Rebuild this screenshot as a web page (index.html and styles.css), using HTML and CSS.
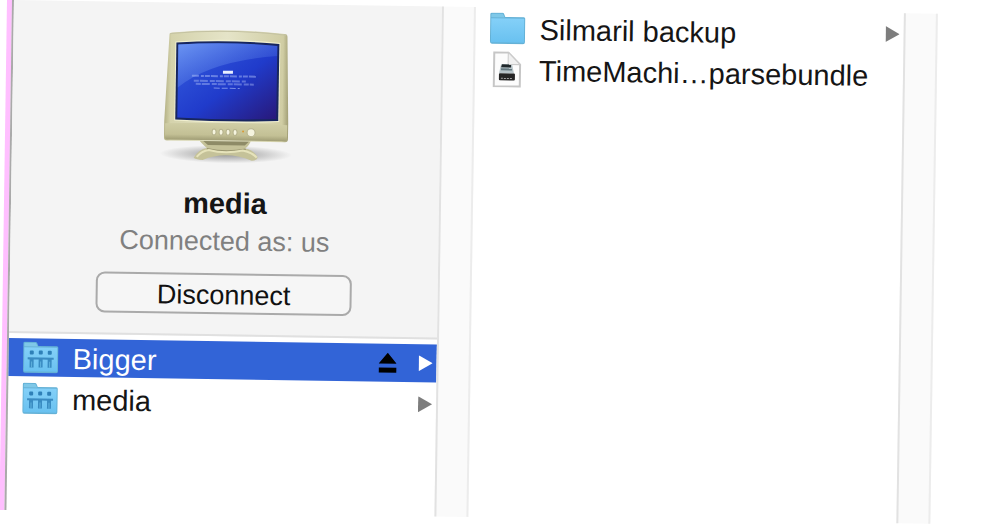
FILE: index.html
```html
<!DOCTYPE html>
<html lang="en">
<head>
    <meta charset="UTF-8">
    <meta name="viewport" content="width=device-width, initial-scale=1.0">
    <title>media</title>
    <link rel="stylesheet" href="styles.css">
</head>
<body>

<!-- Shared icons -->
<svg class="sprite" aria-hidden="true">
    <defs>
        <linearGradient id="folderFill" x1="0" y1="0" x2="0" y2="1">
            <stop offset="0" stop-color="#84d0f8"/>
            <stop offset="1" stop-color="#69c1f0"/>
        </linearGradient>
    </defs>
    <symbol id="folder" viewBox="0 0 36 32">
        <path d="M.5 29V2Q.5.5 2 .5H13Q14 .5 14.500 2L15.500 4.500H34Q35.500 4.500 35.500 6V29.500Q35.500 31.500 33.500 31.500H2.500Q.5 31.500 .5 29Z" fill="#64b1d6"/>
        <path d="M1.500 5V2.500Q1.500 1.500 2.500 1.500H13L15 5Z" fill="#7fc8e8"/>
        <path d="M1.500 6H34.500V30H1.500Z" fill="url(#folderFill)"/>
    </symbol>
    <symbol id="shared" viewBox="0 0 36 32">
        <use href="#folder"/>
        <g fill="#2f80b8">
            <rect x="7" y="9" width="4" height="4" rx="1"/>
            <rect x="16" y="9" width="4" height="4" rx="1"/>
            <rect x="25" y="9" width="4" height="4" rx="1"/>
            <path d="M5 16H31V18H29V26H25V18H20V26H16V18H11V26H7V18H5Z" opacity=".85"/>
        </g>
        <path d="M9 20V26M18 20V26M27 20V26" stroke="#5fb2de"/>
    </symbol>
    <symbol id="arrow" viewBox="0 0 14 16">
        <path d="M0 0L14 8L0 16Z" fill="currentColor"/>
    </symbol>
</svg>

<main class="browser">
    <section class="column">
        <div class="content">
            <header class="server">
                <svg class="monitor" viewBox="0 0 134 136" aria-hidden="true">
                    <defs>
                        <linearGradient id="case" x1="0" y1="0" x2="1" y2="0">
                            <stop offset="0" stop-color="#b5b286"/>
                            <stop offset=".05" stop-color="#d5d3ac"/>
                            <stop offset=".5" stop-color="#e5e4c8"/>
                            <stop offset=".95" stop-color="#d0cda4"/>
                            <stop offset="1" stop-color="#a19e75"/>
                        </linearGradient>
                        <linearGradient id="chin" x1="0" y1="0" x2="0" y2="1">
                            <stop offset="0" stop-color="#d0cea6"/>
                            <stop offset=".7" stop-color="#c3c095"/>
                            <stop offset="1" stop-color="#a19e76"/>
                        </linearGradient>
                        <linearGradient id="screen" x1="0" y1="0" x2="1" y2="1">
                            <stop offset="0" stop-color="#365fe0"/>
                            <stop offset=".55" stop-color="#203bcb"/>
                            <stop offset="1" stop-color="#281879"/>
                        </linearGradient>
                        <linearGradient id="shine" x1="0" y1="0" x2="1" y2="1">
                            <stop offset="0" stop-color="#7aa3f8" stop-opacity=".8"/>
                            <stop offset="1" stop-color="#4264d8" stop-opacity="0"/>
                        </linearGradient>
                        <radialGradient id="shadow">
                            <stop offset="0" stop-color="#555" stop-opacity=".6"/>
                            <stop offset="1" stop-color="#555" stop-opacity="0"/>
                        </radialGradient>
                    </defs>
                    <ellipse cx="67" cy="125" rx="66" ry="9" fill="url(#shadow)"/>
                    <path d="M38 109H93Q90 117 86 119Q95 120 99 128Q98 131 93 131Q67 121 44 131Q38 131 35 129Q40 120 48 119Q44 116 38 109Z" fill="#c5c299"/>
                    <path d="M42 110H92L86 116H49Z" fill="#8e8b67"/>
                    <path d="M48 120Q67 124 87 120" fill="none" stroke="#9a9670" stroke-width="2"/>
                    <path d="M38 128Q43 122 50 121Q66 125 84 121Q94 123 98 128" fill="none" stroke="#e6e3bb" stroke-width="2"/>
                    <path d="M9 6Q9 4 12 4Q67 -2 124 4Q127 4 127 7L129 93V109Q129 112 126 112H8Q5 112 5 109V93Z" fill="url(#case)"/>
                    <path d="M10 5Q67 -1 126 5" fill="none" stroke="#c4c2a2"/>
                    <path d="M6 95Q67 92 128 95V109Q128 111 126 111H8Q6 111 6 109Z" fill="url(#chin)"/>
                    <path d="M15 13Q67 8 120 13V92Q67 95 15 92Z" fill="#f0efcf"/>
                    <path d="M16 14Q67 10 119 14V91Q67 93 16 91Z" fill="#17265f"/>
                    <path d="M18 16Q67 12 117 16V89Q67 91 18 89Z" fill="url(#screen)"/>
                    <path d="M18 16Q67 12 117 16V26Q50 32 18 59Z" fill="url(#shine)"/>
                    <path d="M63 43H73" stroke="#e8efff" stroke-width="3"/>
                    <path d="M32 47H98" stroke="#b9c9fb" stroke-width="2" stroke-dasharray="7 2 3 1 5 1" opacity=".45"/>
                    <path d="M34 52H86M36 55H94" stroke="#b9c9fb" stroke-width="2" stroke-dasharray="5 1 8 2" opacity=".4"/>
                    <path d="M54 59H80" stroke="#b9c9fb" stroke-dasharray="6 2" opacity=".6"/>
                    <g fill="#f5f4df" stroke="#b5b28c">
                        <ellipse cx="55" cy="103" rx="2" ry="3"/>
                        <ellipse cx="62" cy="103" rx="2" ry="3"/>
                        <ellipse cx="69" cy="103" rx="2" ry="3"/>
                        <ellipse cx="76" cy="103" rx="2" ry="3"/>
                        <circle cx="92" cy="103" r="4"/>
                    </g>
                    <circle cx="84" cy="102" r="1" fill="#d99a35"/>
                </svg>
                <h1>media</h1>
                <p>Connected as: us</p>
                <button class="disconnect" type="button">Disconnect</button>
            </header>
            <ul class="list">
                <li class="row selected">
                    <a href="#bigger">
                        <svg class="icon" aria-hidden="true"><use href="#shared"/></svg>
                        <span>Bigger</span>
                    </a>
                    <button class="eject" type="button" aria-label="Eject">
                        <svg viewBox="0 0 18 21" aria-hidden="true"><path d="M9 0L18 11H0ZM0 15H18V20H0Z"/></svg>
                    </button>
                    <svg class="arrow" aria-hidden="true"><use href="#arrow"/></svg>
                </li>
                <li class="row">
                    <a href="#media">
                        <svg class="icon" aria-hidden="true"><use href="#shared"/></svg>
                        <span>media</span>
                    </a>
                    <svg class="arrow" aria-hidden="true"><use href="#arrow"/></svg>
                </li>
            </ul>
        </div>
        <div class="gutter"></div>
    </section>

    <section class="column">
        <div class="content">
            <ul class="list files">
                <li class="row">
                    <a href="#silmaril">
                        <svg class="icon" aria-hidden="true"><use href="#folder"/></svg>
                        <span>Silmaril backup</span>
                    </a>
                    <svg class="arrow" aria-hidden="true"><use href="#arrow"/></svg>
                </li>
                <li class="row">
                    <a href="#timemachine">
                        <svg class="icon document" viewBox="0 0 36 36" aria-hidden="true">
                            <path d="M5 1H19L31 13V35H5Z" fill="#fcfcfc" stroke="#c6c6c6" stroke-width="2"/>
                            <path d="M19 1V13H31Z" fill="#f0f0f0" stroke="#cacaca"/>
                            <path d="M12 13H23L25 22H10Z" fill="#b7c4c9"/>
                            <path d="M13 13H22V16H12Z" fill="#20282b"/>
                            <path d="M12 18H23" stroke="#657980" stroke-width="2"/>
                            <rect x="10" y="22" width="16" height="7" rx="1" fill="#252525"/>
                            <path d="M12 27H24" stroke="#a0a0a0" stroke-dasharray="2 1"/>
                        </svg>
                        <span>TimeMachi…parsebundle</span>
                    </a>
                </li>
            </ul>
        </div>
        <div class="gutter"></div>
    </section>
</main>

</body>
</html>
```
FILE: styles.css
```css
* {
    box-sizing: border-box;
}

html {
    overflow: hidden;
    background-color: #fff;
}

body {
    min-height: 100vh;
    margin: 0;
    padding: 0 62px 22px 7px;
    font-family: "Liberation Sans", Arial, sans-serif;
    font-size: 29px;
    line-height: 34px;
    color: #151515;
}

.sprite {
    position: absolute;
    width: 0;
    height: 0;
}

/* The whole window leans slightly to the right */
.browser {
    display: flex;
    min-height: calc(100vh - 22px);
    border-left: 5px solid #ffbfff;
    transform: rotate(0.85deg);
    transform-origin: 0 0;
}

.column {
    display: flex;
    flex: 1;
    min-width: 0;
}

.column:first-child {
    border-left: 2px solid #aaa;
}

.content {
    flex: 1;
    min-width: 0;
}

.gutter {
    width: 34px;
    background-color: #fafafa;
    border-left: 2px solid #e2e2e2;
    border-right: 2px solid #ececec;
}

.server {
    display: flex;
    flex-direction: column;
    align-items: center;
    padding: 26px 0 20px;
    background-color: #f4f4f4;
    border-bottom: 2px solid #e0e0e0;
}

.monitor {
    width: 134px;
    height: 136px;
}

.server h1 {
    margin: 21px 0 4px;
    font-size: 29px;
    line-height: 34px;
}

.server p {
    margin: 0;
    font-size: 27px;
    color: #808080;
}

.disconnect {
    width: 60%;
    height: 41px;
    margin-top: 15px;
    padding: 3px 0 0;
    background-color: #f6f6f6;
    border: 2px solid #aaa;
    border-radius: 9px;
    font-family: inherit;
    font-size: 27px;
    color: #111;
}

.list {
    display: flex;
    flex-direction: column;
    gap: 3px;
    margin: 0;
    padding: 5px 0 0;
    list-style: none;
}

.files {
    padding-top: 2px;
}

.row {
    display: flex;
    align-items: center;
    height: 38px;
    padding: 0 4px 0 14px;
}

.row a {
    display: flex;
    flex: 1;
    align-items: center;
    gap: 14px;
    color: inherit;
    text-decoration: none;
    white-space: nowrap;
}

.row span {
    padding-top: 2px;
}

.selected {
    background-color: #3264d7;
    color: #fff;
}

.icon {
    width: 36px;
    height: 32px;
}

.document {
    height: 36px;
}

.arrow {
    width: 14px;
    height: 16px;
    color: #7d7d7d;
}

.selected .arrow {
    color: #fff;
}

.eject {
    display: flex;
    margin-right: 22px;
    padding: 0;
    background: none;
    border: none;
    color: #000;
}

.eject svg {
    width: 18px;
    height: 21px;
}
```
